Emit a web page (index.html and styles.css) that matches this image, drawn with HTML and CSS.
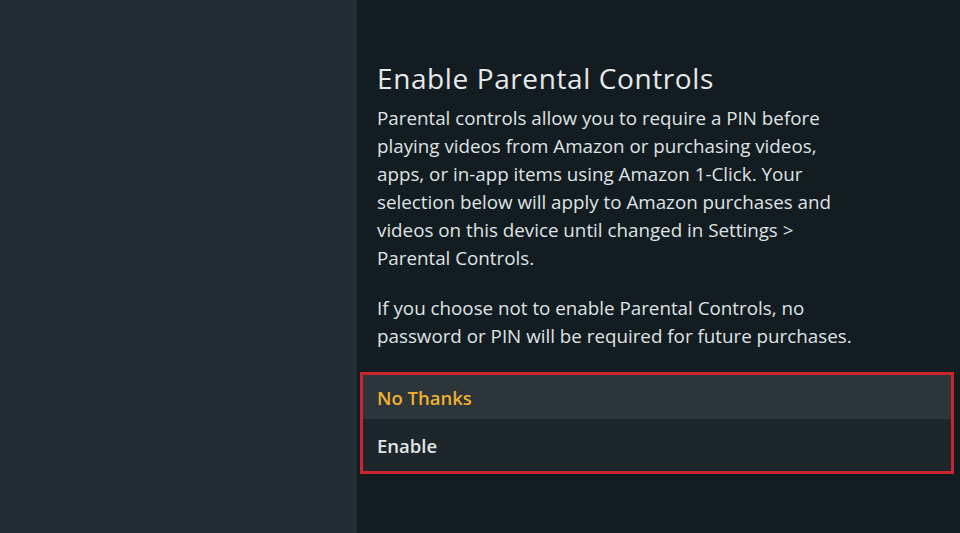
FILE: index.html
```html
<!DOCTYPE html>
<html>
<head>
<meta charset="utf-8">
<link rel="stylesheet" href="styles.css">
</head>
<body>
<div class="screen">
  <div class="side"></div>
  <div class="main">
    <h1 class="title">Enable Parental Controls</h1>
    <p class="text">Parental controls allow you to require a PIN before playing videos from Amazon or purchasing videos, apps, or in-app items using Amazon 1-Click. Your selection below will apply to Amazon purchases and videos on this device until changed in Settings &gt; Parental Controls.</p>
    <p class="text second">If you choose not to enable Parental Controls, no password or PIN will be required for future purchases.</p>
    <div class="options">
      <div class="option focused">No Thanks</div>
      <div class="option">Enable</div>
    </div>
  </div>
</div>
</body>
</html>
```
FILE: styles.css
```css
html, body {
  margin: 0;
  padding: 0;
  width: 960px;
  height: 533px;
  overflow: hidden;
}
.screen {
  display: flex;
  width: 960px;
  height: 533px;
  font-family: "Open Sans", "Noto Sans", sans-serif;
}
.side {
  width: 357px;
  background: #232e34;
}
.main {
  flex: 1;
  background: #131c21;
  padding: 58px 6px 0 3px;
  display: flex;
  flex-direction: column;
}
.title {
  margin: 0 0 0 17px;
  font-size: 28px;
  font-weight: 400;
  letter-spacing: 0.6px;
  line-height: 40px;
  padding-bottom: 6px;
  color: #e6e9ea;
}
.text {
  margin: 0 0 0 17px;
  width: 490px;
  font-size: 18.8px;
  line-height: 28px;
  color: #dfe3e5;
}
.second {
  margin-top: 22px;
}
.options {
  margin-top: 22px;
  border: 3px solid #c9252f;
  display: flex;
  flex-direction: column;
}
.option {
  height: 52px;
  padding-left: 14px;
  display: flex;
  align-items: center;
  font-size: 18.5px;
  font-weight: 600;
  color: #e0e5e7;
  background: #1d262b;
}
.option.focused {
  height: 44px;
  background: #2b353a;
  color: #f0b030;
}
```
